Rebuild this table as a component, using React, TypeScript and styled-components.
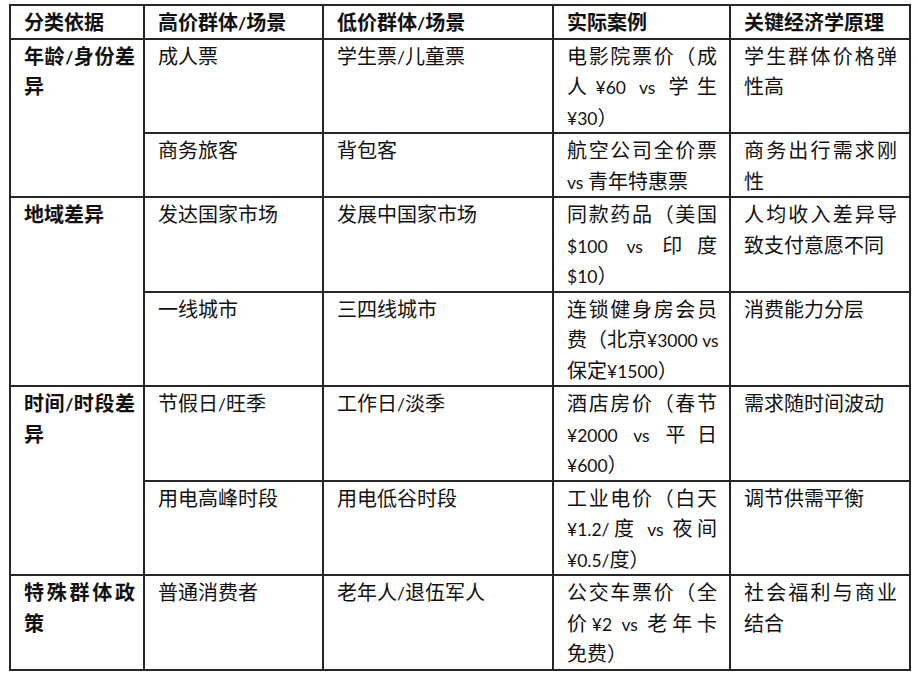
import React from "react";
import styled, { createGlobalStyle } from "styled-components";

const GlobalStyle = createGlobalStyle`
  html, body {
    margin: 0;
    padding: 0;
    background: #ffffff;
  }
  body {
    font-family: "Noto Sans CJK SC", sans-serif;
    color: #111;
  }
`;

const Page = styled.div`
  padding: 4px 0 0 9px;
`;

const Table = styled.table`
  border-collapse: collapse;
  table-layout: fixed;
  width: 900px;
  font-size: 20px;
  line-height: 30.5px;
`;

const Col = styled.col<{ $w: number }>`
  width: ${(p) => p.$w}px;
`;

const HeadCell = styled.th`
  border: 2px solid #262626;
  padding: 1px 10px 0 13px;
  text-align: left;
  font-weight: 700;
  vertical-align: top;
`;

const Cell = styled.td<{ $bold?: boolean }>`
  border: 2px solid #262626;
  padding: 1px ${(p) => (p.$bold ? 8 : 12)}px 0 13px;
  vertical-align: top;
  text-align: justify;
  text-justify: inter-character;
  font-weight: ${(p) => (p.$bold ? 700 : 400)};
`;

// one line of a case text, broken where the document breaks it
const Line = styled.div<{ $last: boolean }>`
  white-space: nowrap;
  text-align: justify;
  text-align-last: ${(p) => (p.$last ? "left" : "justify")};
`;

// Latin runs are set in a narrower face, like Calibri next to SimSun
const Latin = styled.span`
  font-family: "Lato", "Liberation Sans", sans-serif;
  font-size: 17.5px;
  line-height: 1;
`;

function Mixed({ text }: { text: string }) {
  const parts = text.split(/([\x20-\x7E¥]+)/).filter((s) => s !== "");
  return (
    <>
      {parts.map((p, i) =>
        /^[\x20-\x7E¥]+$/.test(p) ? <Latin key={i}>{p}</Latin> : <React.Fragment key={i}>{p}</React.Fragment>
      )}
    </>
  );
}

function Lines({ lines }: { lines: string[] }) {
  return (
    <>
      {lines.map((l, i) => (
        <Line key={i} $last={i === lines.length - 1}>
          <Mixed text={l} />
        </Line>
      ))}
    </>
  );
}

type Row = {
  high: string;
  low: string;
  example: string[];
  principle: string;
};

type Group = {
  basis: string;
  rows: Row[];
};

const headers = ["分类依据", "高价群体/场景", "低价群体/场景", "实际案例", "关键经济学原理"];
const widths = [134, 179, 230, 177, 180];

const groups: Group[] = [
  {
    basis: "年龄/身份差异",
    rows: [
      {
        high: "成人票",
        low: "学生票/儿童票",
        example: ["电影院票价（成", "人¥60 vs 学生", "¥30）"],
        principle: "学生群体价格弹性高",
      },
      {
        high: "商务旅客",
        low: "背包客",
        example: ["航空公司全价票", "vs 青年特惠票"],
        principle: "商务出行需求刚性",
      },
    ],
  },
  {
    basis: "地域差异",
    rows: [
      {
        high: "发达国家市场",
        low: "发展中国家市场",
        example: ["同款药品（美国", "$100 vs 印度", "$10）"],
        principle: "人均收入差异导致支付意愿不同",
      },
      {
        high: "一线城市",
        low: "三四线城市",
        example: ["连锁健身房会员", "费（北京¥3000 vs", "保定¥1500）"],
        principle: "消费能力分层",
      },
    ],
  },
  {
    basis: "时间/时段差异",
    rows: [
      {
        high: "节假日/旺季",
        low: "工作日/淡季",
        example: ["酒店房价（春节", "¥2000 vs 平日", "¥600）"],
        principle: "需求随时间波动",
      },
      {
        high: "用电高峰时段",
        low: "用电低谷时段",
        example: ["工业电价（白天", "¥1.2/度 vs 夜间", "¥0.5/度）"],
        principle: "调节供需平衡",
      },
    ],
  },
  {
    basis: "特殊群体政策",
    rows: [
      {
        high: "普通消费者",
        low: "老年人/退伍军人",
        example: ["公交车票价（全", "价¥2 vs 老年卡", "免费）"],
        principle: "社会福利与商业结合",
      },
    ],
  },
];

export default function App() {
  return (
    <Page>
      <GlobalStyle />
      <Table>
        <colgroup>
          {widths.map((w, i) => (
            <Col key={i} $w={w} />
          ))}
        </colgroup>
        <thead>
          <tr>
            {headers.map((h) => (
              <HeadCell key={h}>
                <Mixed text={h} />
              </HeadCell>
            ))}
          </tr>
        </thead>
        <tbody>
          {groups.map((g) =>
            g.rows.map((r, i) => (
              <tr key={g.basis + i}>
                {i === 0 && (
                  <Cell $bold rowSpan={g.rows.length}>
                    <Mixed text={g.basis} />
                  </Cell>
                )}
                <Cell>
                  <Mixed text={r.high} />
                </Cell>
                <Cell>
                  <Mixed text={r.low} />
                </Cell>
                <Cell>
                  <Lines lines={r.example} />
                </Cell>
                <Cell>
                  <Mixed text={r.principle} />
                </Cell>
              </tr>
            ))
          )}
        </tbody>
      </Table>
    </Page>
  );
}
